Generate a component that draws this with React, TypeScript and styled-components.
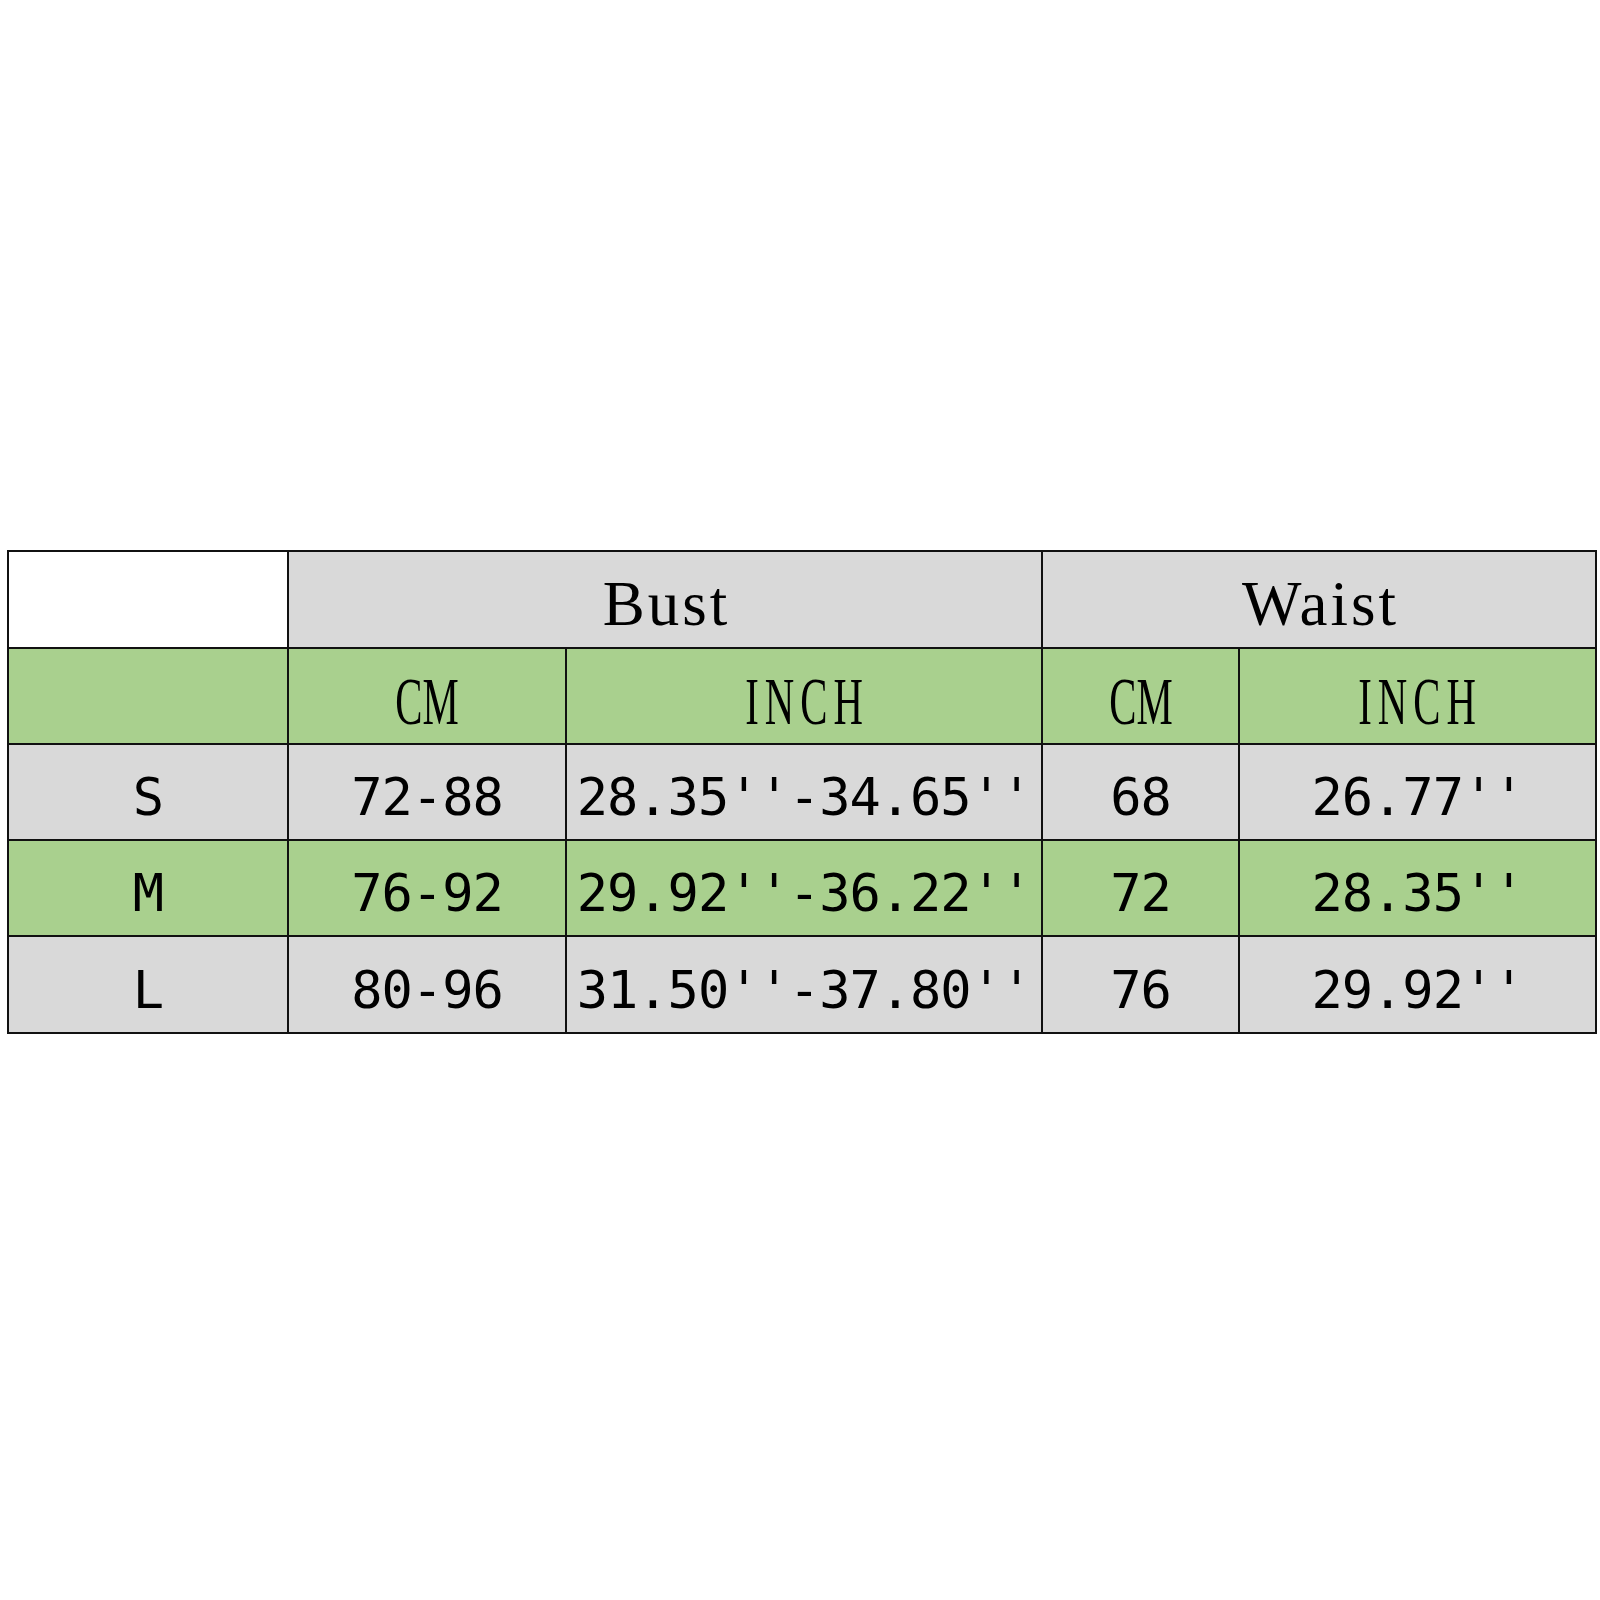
import styled, { createGlobalStyle } from 'styled-components';

const GREY = '#d9d9d9';
const GREEN = '#a9d08e';
const LINE = '#111';

type Tone = 'white' | 'grey' | 'green';

const TONES: Record<Tone, string> = {
  white: '#ffffff',
  grey: GREY,
  green: GREEN,
};

const sizes = [
  { size: 'S', cm: '72-88', inch: "28.35''-34.65''", waistCm: '68', waistInch: "26.77''" },
  { size: 'M', cm: '76-92', inch: "29.92''-36.22''", waistCm: '72', waistInch: "28.35''" },
  { size: 'L', cm: '80-96', inch: "31.50''-37.80''", waistCm: '76', waistInch: "29.92''" },
];

function App() {
  return (
    <>
      <GlobalStyle />
      <Page>
        <Chart>
          <Cell tone="white" />
          <Cell tone="grey" span={2}>
            <GroupTitle>Bust</GroupTitle>
          </Cell>
          <Cell tone="grey" span={2}>
            <GroupTitle>Waist</GroupTitle>
          </Cell>

          <Cell tone="green" />
          <Cell tone="green">
            <Unit>CM</Unit>
          </Cell>
          <Cell tone="green">
            <Unit spread={10}>INCH</Unit>
          </Cell>
          <Cell tone="green">
            <Unit>CM</Unit>
          </Cell>
          <Cell tone="green">
            <Unit spread={10}>INCH</Unit>
          </Cell>

          {sizes.map((row, i) => {
            const tone: Tone = i % 2 === 0 ? 'grey' : 'green';
            return [
              <Cell key={`${row.size}-s`} tone={tone}><Value>{row.size}</Value></Cell>,
              <Cell key={`${row.size}-c`} tone={tone}><Value>{row.cm}</Value></Cell>,
              <Cell key={`${row.size}-i`} tone={tone}><Value>{row.inch}</Value></Cell>,
              <Cell key={`${row.size}-wc`} tone={tone}><Value>{row.waistCm}</Value></Cell>,
              <Cell key={`${row.size}-wi`} tone={tone}><Value>{row.waistInch}</Value></Cell>,
            ];
          })}
        </Chart>
      </Page>
    </>
  );
}

export default App;

const GlobalStyle = createGlobalStyle`
  html, body {
    margin: 0;
    padding: 0;
    background: #fff;
  }
  body {
    font-family: "Liberation Serif", serif;
    color: #000;
  }
`;

const Page = styled.div`
  width: 1600px;
  height: 1600px;
  padding: 550px 0 0 7px;
  box-sizing: border-box;
  overflow: hidden;
`;

const Chart = styled.div`
  display: grid;
  grid-template-columns: 280px 278px 476px 197px 357px;
  grid-template-rows: 97px 96px 96px 96px 97px;
  width: max-content;
  border-top: 2px solid ${LINE};
  border-left: 2px solid ${LINE};
`;

const Cell = styled.div<{ tone: Tone; span?: number }>`
  grid-column: span ${(p) => p.span ?? 1};
  display: flex;
  align-items: center;
  justify-content: center;
  padding-top: 10px;
  box-sizing: border-box;
  background: ${(p) => TONES[p.tone]};
  border-right: 2px solid ${LINE};
  border-bottom: 2px solid ${LINE};
  white-space: nowrap;
  overflow: hidden;
`;

const GroupTitle = styled.span`
  font-family: "Liberation Serif", serif;
  font-size: 63px;
  line-height: 1;
  letter-spacing: 3px;
  padding-left: 3px;
`;

const Unit = styled.span<{ spread?: number }>`
  display: inline-block;
  font-family: "Liberation Serif", serif;
  font-size: 68px;
  line-height: 1;
  letter-spacing: ${(p) => p.spread ?? 0}px;
  padding-left: ${(p) => p.spread ?? 0}px;
  transform: scaleX(0.6);
`;

const Value = styled.span`
  font-family: "DejaVu Sans Mono", monospace;
  font-size: 52px;
  line-height: 1;
  letter-spacing: -1px;
`;
